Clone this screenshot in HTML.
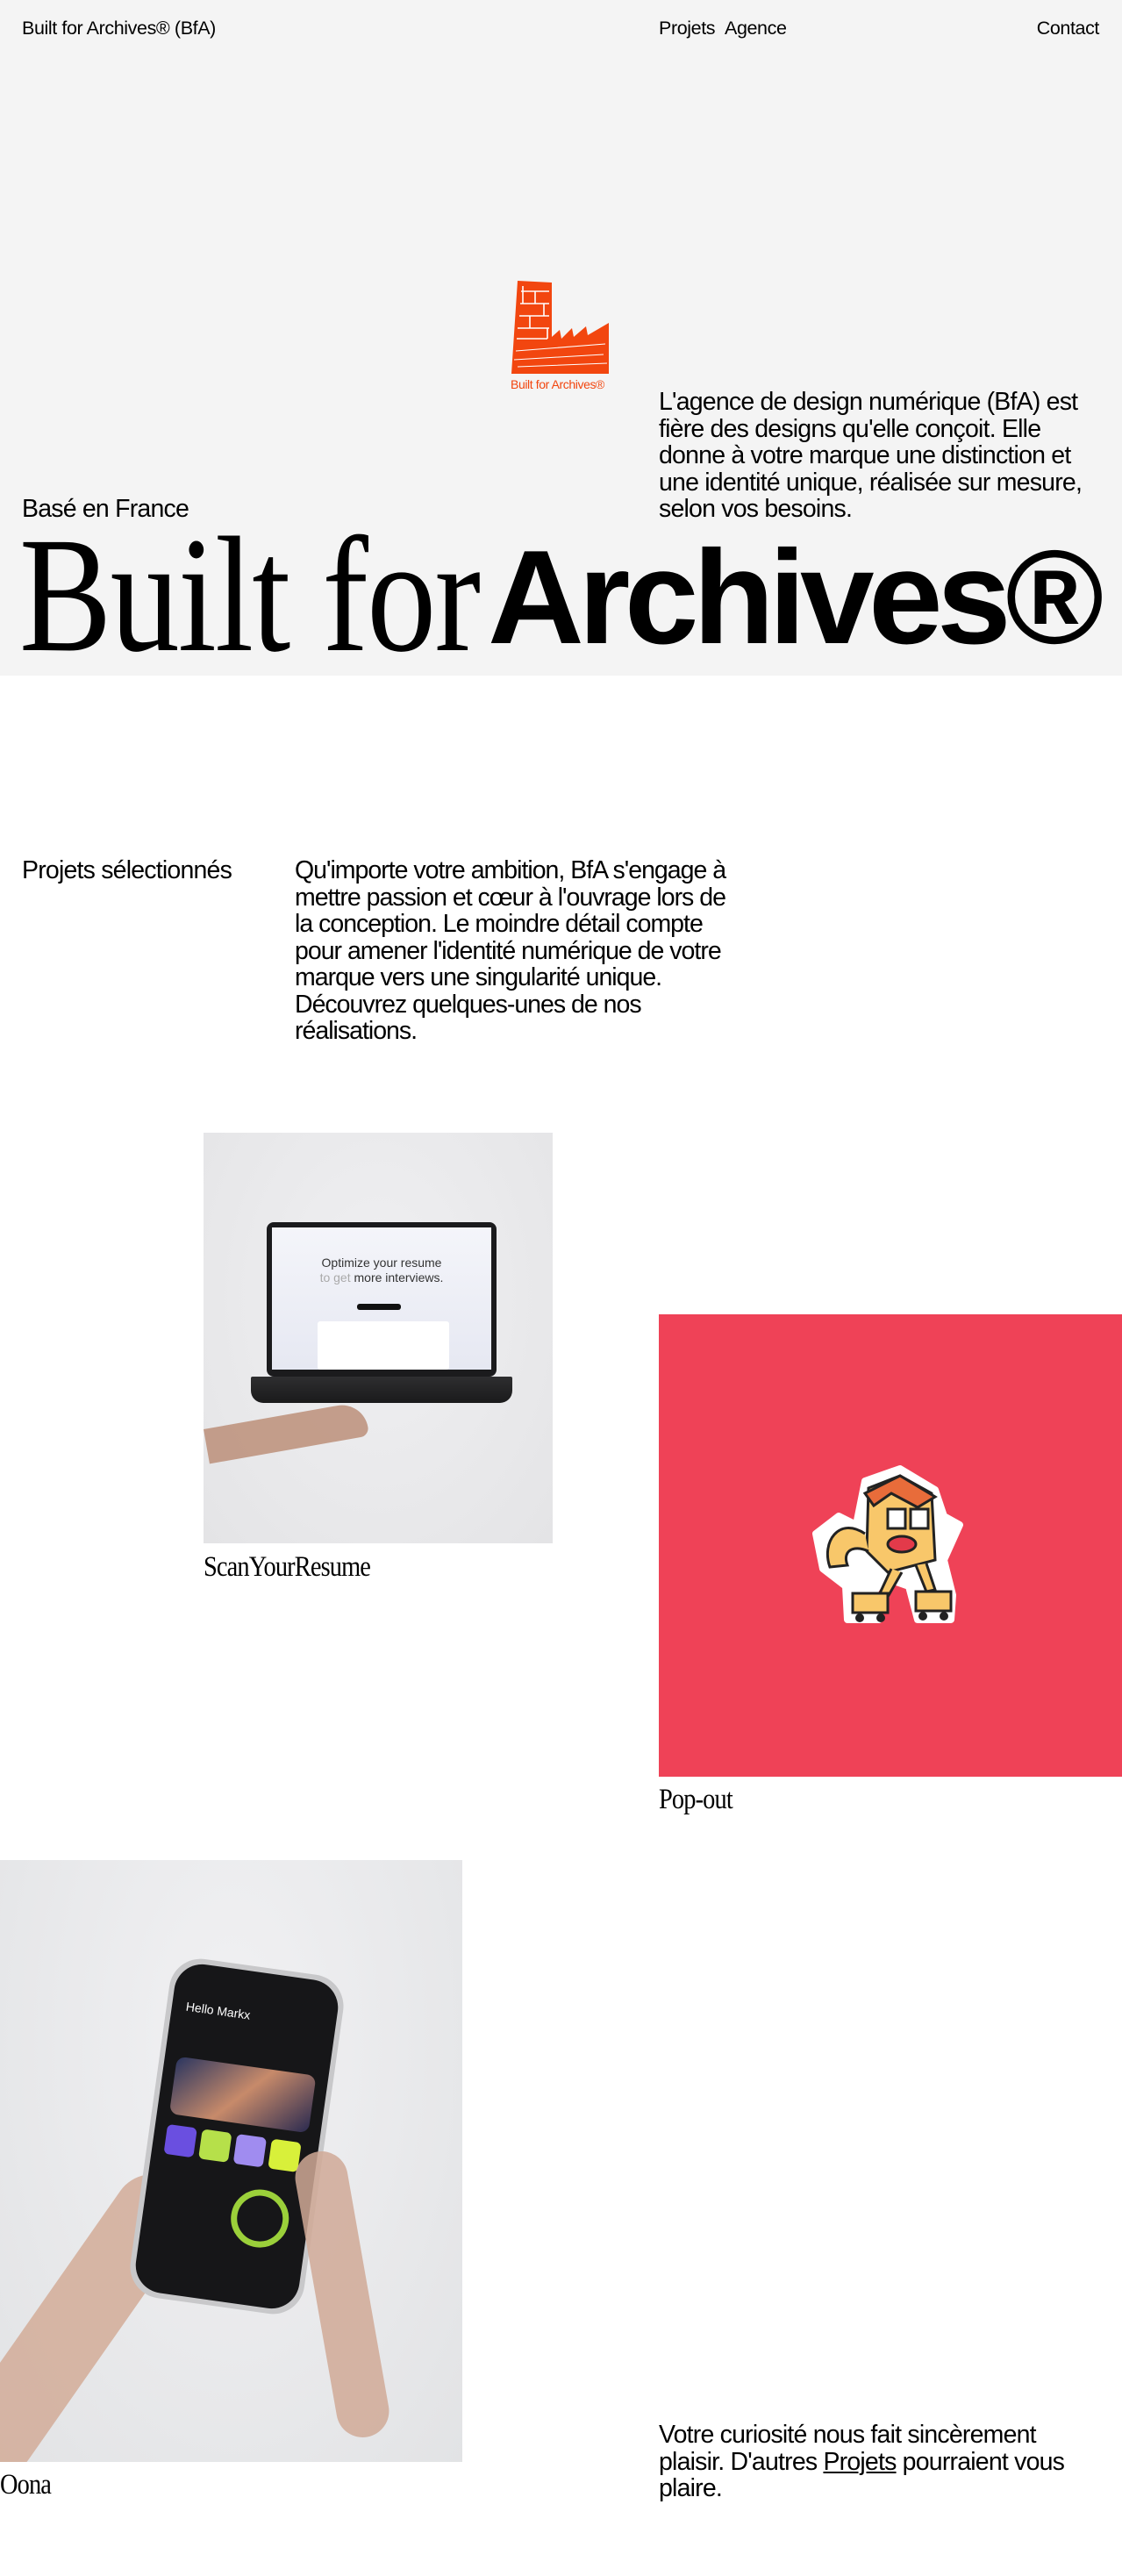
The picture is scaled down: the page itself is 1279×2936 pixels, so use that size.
<!DOCTYPE html>
<html><head><meta charset="utf-8">
<style>
*{margin:0;padding:0;box-sizing:border-box}
body{width:1279px;height:2936px;background:#fff;font-family:"Liberation Sans",Arial,sans-serif;color:#000;position:relative;overflow:hidden}
.abs{position:absolute}
.hero{position:absolute;left:0;top:0;width:1279px;height:770px;background:#f4f4f4}
.nav{font-size:21.5px;letter-spacing:-0.4px}
.p28{font-size:28.5px;line-height:30.5px;letter-spacing:-0.8px}
.serif{font-family:"Liberation Serif","Times New Roman",serif}
.cap{font-size:33px;letter-spacing:-1px;transform:scaleX(0.86);transform-origin:left top;white-space:nowrap}
</style></head><body>
<div class="hero">
  <div class="abs nav" style="left:25px;top:20px">Built for Archives® (BfA)</div>
  <div class="abs nav" style="left:751px;top:20px">Projets</div>
  <div class="abs nav" style="left:826px;top:20px">Agence</div>
  <div class="abs nav" style="right:26px;top:20px">Contact</div>

  <svg class="abs" style="left:580px;top:318px" width="120" height="112" viewBox="0 0 120 112">
    <path d="M10 2 L49 4 L49 66 L58 58 L60 68 L72 56 L74 66 L88 54 L90 64 L114 50 L114 108 L3 108 Z" fill="#f2460f"/>
    <g stroke="#fff" stroke-width="1.6" fill="none">
      <path d="M14 14 H46 M13 28 H46 M12 42 H46 M10 56 H46 M16 8 V28 M30 14 V28 M40 28 V42 M24 42 V56 M44 56 V68 M9 68 H44"/>
      <path d="M8 82 L110 74 M6 92 L108 86 M10 100 L112 96" stroke-width="1"/>
    </g>
  </svg>
  <div class="abs" style="left:582px;top:430px;font-size:14px;color:#f2460f;letter-spacing:-0.4px">Built for Archives®</div>

  <div class="abs p28" style="left:751px;top:443px;width:510px">L'agence de design numérique (BfA) est fière des designs qu'elle conçoit. Elle donne à votre marque une distinction et une identité unique, réalisée sur mesure, selon vos besoins.</div>
  <div class="abs p28" style="left:25px;top:565px">Basé en France</div>

  <div class="abs serif" style="left:22px;top:584px;font-size:188px;line-height:188px;transform:scaleX(0.84);transform-origin:left top;white-space:nowrap;letter-spacing:-2px">Built for</div>
  <div class="abs" style="left:556px;top:596px;font-size:152px;line-height:170px;font-weight:bold;letter-spacing:-6.5px;white-space:nowrap">Archives®</div>
</div>

<div class="abs p28" style="left:25px;top:977px">Projets sélectionnés</div>
<div class="abs p28" style="left:336px;top:977px;width:503px;letter-spacing:-1px">Qu'importe votre ambition, BfA s'engage à mettre passion et cœur à l'ouvrage lors de la conception. Le moindre détail compte pour amener l'identité numérique de votre marque vers une singularité unique. Découvrez quelques-unes de nos réalisations.</div>

<!-- Laptop image -->
<div class="abs" style="left:232px;top:1291px;width:398px;height:468px;background:radial-gradient(ellipse at 50% 40%,#f0f0f2,#e4e4e6);overflow:hidden">
  <div class="abs" style="left:72px;top:102px;width:262px;height:176px;background:#1b1b1d;border-radius:8px"></div>
  <div class="abs" style="left:78px;top:108px;width:250px;height:162px;background:linear-gradient(#f4f5fa,#e6e8f2)"></div>
  <div class="abs" style="left:78px;top:140px;width:250px;text-align:center;font-size:14px;color:#333;line-height:17px">Optimize your resume<br><span style="color:#aaa">to get</span> more interviews.</div>
  <div class="abs" style="left:175px;top:195px;width:50px;height:7px;background:#111;border-radius:3px"></div>
  <div class="abs" style="left:130px;top:215px;width:150px;height:55px;background:#fff;border-radius:3px"></div>
  <div class="abs" style="left:54px;top:278px;width:298px;height:30px;background:linear-gradient(#2e2e30,#1a1a1b);border-radius:2px 2px 14px 14px"></div>
  <div class="abs" style="left:0;top:338px;width:185px;height:40px;background:#b98a72;border-radius:0 30px 10px 0;transform:rotate(-10deg);transform-origin:left top;opacity:.8"></div>
</div>
<div class="abs serif cap" style="left:232px;top:1768px">ScanYourResume</div>

<!-- Pop-out -->
<div class="abs" style="left:751px;top:1498px;width:528px;height:527px;background:#ef4257">
  <svg class="abs" style="left:165px;top:170px" width="200" height="200" viewBox="0 0 200 200">
    <path d="M70 20 L110 6 L150 30 L160 60 L178 70 L160 110 L170 150 L168 178 L130 178 L120 140 L92 130 L78 150 L86 178 L50 178 L48 140 L22 120 L14 80 L40 60 L60 70 Z" fill="#fff" stroke="#fff" stroke-width="8" stroke-linejoin="round"/>
    <path d="M74 28 L110 14 L146 34 L150 110 L96 124 L72 100 Z" fill="#f8c76a" stroke="#222" stroke-width="3"/>
    <path d="M70 34 L110 14 L150 38 L130 50 L100 34 L80 48 Z" fill="#e86c3a" stroke="#222" stroke-width="3"/>
    <path d="M70 80 C40 60 20 90 30 118 L50 116 C44 100 56 92 74 100" fill="#f8c76a" stroke="#222" stroke-width="3"/>
    <rect x="96" y="52" width="20" height="22" fill="#fff" stroke="#222" stroke-width="3"/>
    <rect x="122" y="52" width="20" height="22" fill="#fff" stroke="#222" stroke-width="3"/>
    <ellipse cx="112" cy="92" rx="16" ry="9" fill="#e33a4a" stroke="#222" stroke-width="3"/>
    <path d="M100 120 L86 150 L96 152 L112 124 M128 116 L140 146 L150 144 L140 114" fill="#f8c76a" stroke="#222" stroke-width="3"/>
    <rect x="56" y="148" width="40" height="22" fill="#f8c76a" stroke="#222" stroke-width="3"/>
    <rect x="128" y="146" width="40" height="22" fill="#f8c76a" stroke="#222" stroke-width="3"/>
    <circle cx="64" cy="176" r="5" fill="#222"/><circle cx="88" cy="176" r="5" fill="#222"/>
    <circle cx="136" cy="174" r="5" fill="#222"/><circle cx="160" cy="174" r="5" fill="#222"/>
  </svg>
</div>
<div class="abs serif cap" style="left:751px;top:2033px">Pop-out</div>

<!-- Phone image -->
<div class="abs" style="left:0;top:2120px;width:527px;height:686px;background:radial-gradient(ellipse at 50% 30%,#f1f1f3,#e2e3e5);overflow:hidden">
  <div class="abs" style="left:40px;top:330px;width:90px;height:400px;background:#d2ab98;border-radius:45px;transform:rotate(35deg);opacity:.85"></div>
  <div class="abs" style="left:170px;top:120px;width:200px;height:390px;background:#c8c8ca;border-radius:36px;transform:rotate(8deg)"></div>
  <div class="abs" style="left:176px;top:126px;width:188px;height:378px;background:#161618;border-radius:32px;transform:rotate(8deg)">
    <div class="abs" style="left:14px;top:108px;width:160px;height:66px;border-radius:10px;background:linear-gradient(135deg,#2a3560,#c78a6a,#2a2a50)"></div>
    <div class="abs" style="left:14px;top:186px;width:34px;height:34px;border-radius:6px;background:#6a4fe0"></div>
    <div class="abs" style="left:54px;top:186px;width:34px;height:34px;border-radius:6px;background:#b6e04a"></div>
    <div class="abs" style="left:94px;top:186px;width:34px;height:34px;border-radius:6px;background:#a08cf0"></div>
    <div class="abs" style="left:134px;top:186px;width:34px;height:34px;border-radius:6px;background:#d8f03a"></div>
    <div class="abs" style="left:100px;top:245px;width:66px;height:66px;border-radius:50%;border:7px solid #9bd03a"></div>
    <div class="abs" style="left:16px;top:42px;color:#fff;font-size:14px">Hello Markx</div>
  </div>
  <div class="abs" style="left:360px;top:330px;width:60px;height:330px;background:#d0a997;border-radius:30px;transform:rotate(-10deg);opacity:.85"></div>
</div>
<div class="abs serif cap" style="left:0;top:2814px">Oona</div>

<div class="abs p28" style="left:751px;top:2760px;width:510px">Votre curiosité nous fait sincèrement plaisir. D'autres <span style="text-decoration:underline">Projets</span> pourraient vous plaire.</div>
</body></html>
